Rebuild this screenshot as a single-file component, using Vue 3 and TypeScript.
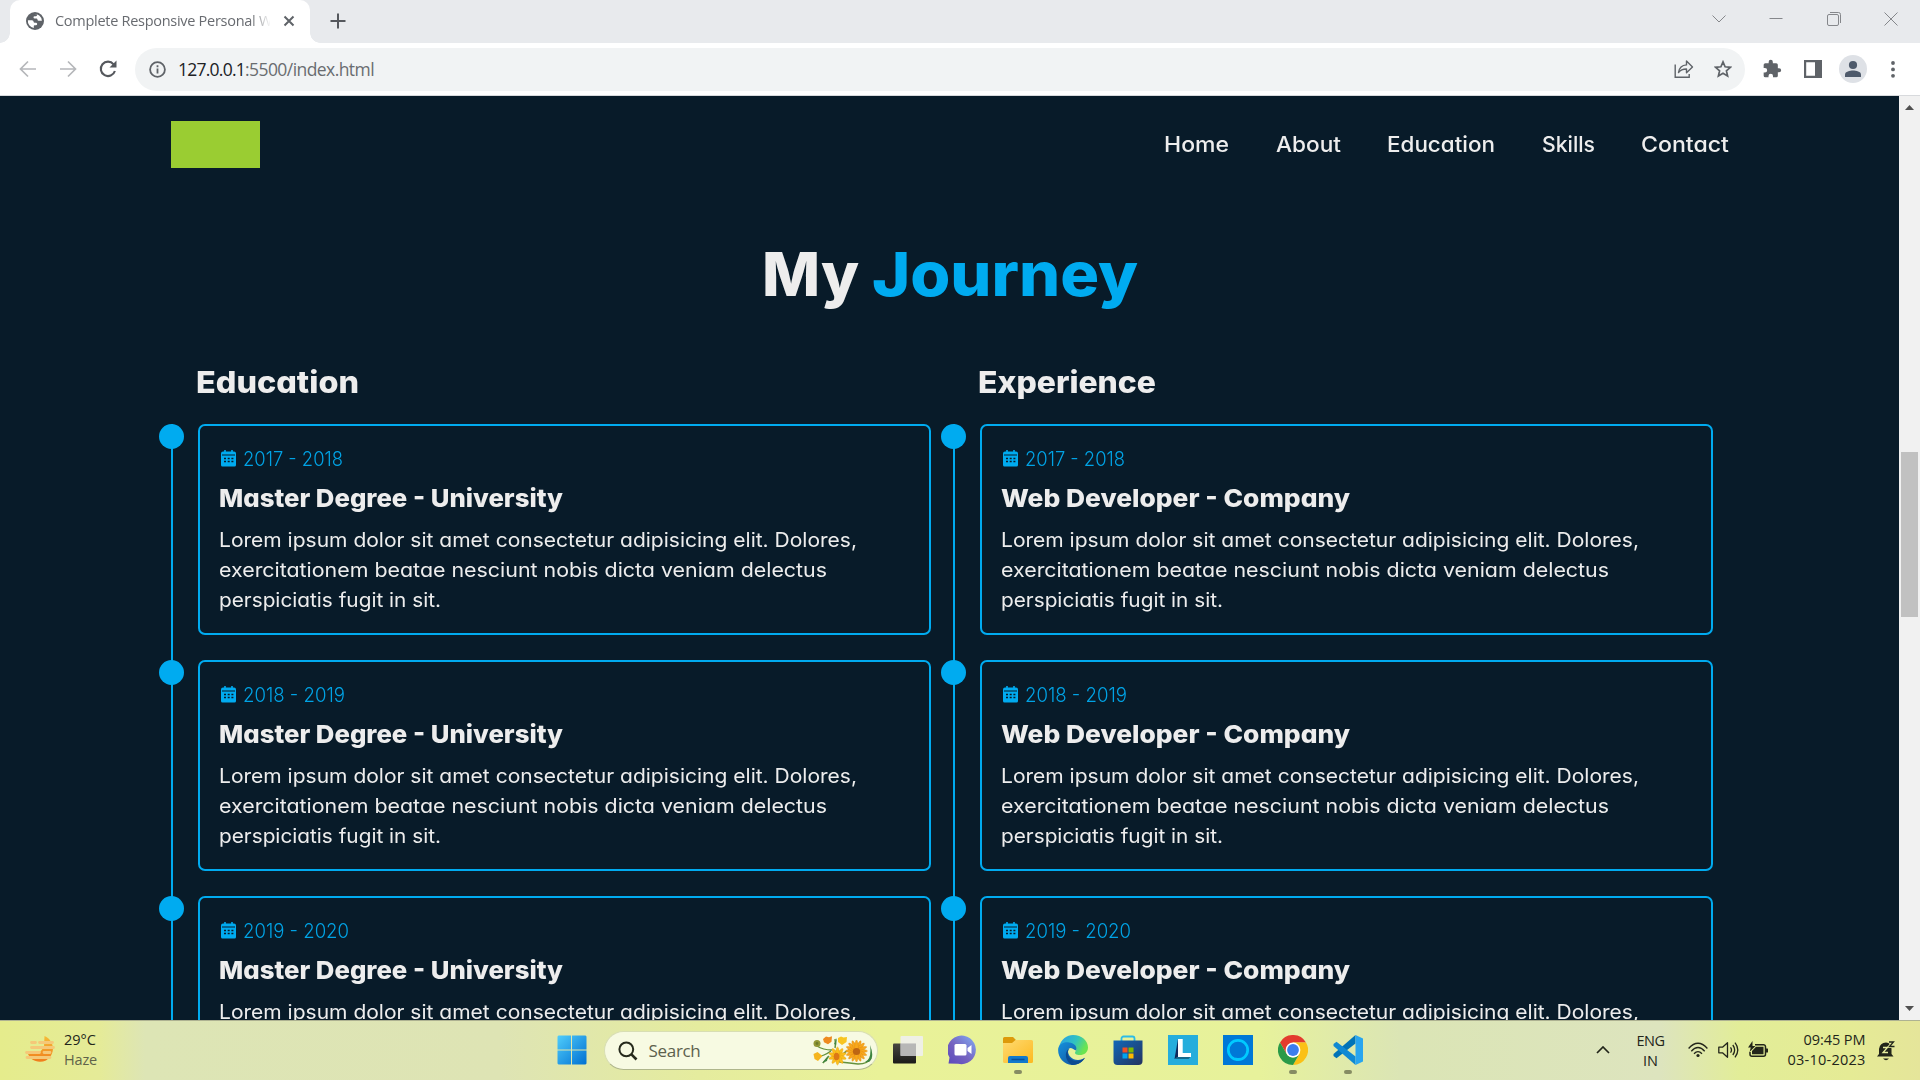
<script setup lang="ts">
const nav = [
  { label: 'Home', width: 65 },
  { label: 'About', width: 65 },
  { label: 'Education', width: 108 },
  { label: 'Skills', width: 53 },
  { label: 'Contact', width: 88 },
]
const years: { text: string; width: number }[] = [
  { text: '2017 - 2018', width: 100 },
  { text: '2018 - 2019', width: 102 },
  { text: '2019 - 2020', width: 106 },
]
const lines = [
  { text: 'Lorem ipsum dolor sit amet consectetur adipisicing elit. Dolores,', width: 638 },
  { text: 'exercitationem beatae nesciunt nobis dicta veniam delectus', width: 608 },
  { text: 'perspiciatis fugit in sit.', width: 222 },
]
const columns = [
  { heading: 'Education', width: 163, title: 'Master Degree - University', titleWidth: 344 },
  { heading: 'Experience', width: 178, title: 'Web Developer - Company', titleWidth: 349 },
]

// Tracks a run of text out (or in) so that it occupies the given width.
const vFit = {
  mounted(el: HTMLElement, binding: { value: number }) {
    const count = (el.textContent ?? '').length
    const natural = el.getBoundingClientRect().width
    el.style.letterSpacing = `${(binding.value - natural) / count}px`
  },
}

// Widens the letterforms themselves, keeping the tight geometric spacing.
const vStretch = {
  mounted(el: HTMLElement, binding: { value: number }) {
    const natural = el.getBoundingClientRect().width
    el.style.transform = `scaleX(${binding.value / natural})`
  },
}
</script>

<template>
  <div class="screen">
    <header class="tabstrip">
      <div class="tab">
        <svg class="globe" width="18" height="18" viewBox="0 0 18 18">
          <circle cx="9" cy="9" r="9" fill="#5f6368" />
          <path d="M1.900 8.200H6q1.600.2 1.600 1.600 0 .9 1.200.9h1.400q1 .2 1 1.200 0 1.300-1.400 1.300H8.600q-.8.100-.8.900v1.900A7 7 0 0 1 1.900 8.200zM7.600 2.100q2-.4 3.400.100v.8q0 1.300-1.200 1.300H8.500q-1 .1-1 1.100t1.200 1.200h2q.8.2.8 1.100t1.100 1h3.300A7.100 7.100 0 0 0 7.600 2.100z" fill="#fff" />
        </svg>
        <div class="tab-title"><span v-fit="217">Complete Responsive Personal W</span></div>
        <svg class="tab-close" width="12" height="12" viewBox="0 0 12 12"><path d="M1.500 1.500l9 9M10.500 1.500l-9 9" stroke="#5f6368" stroke-width="2" /></svg>
      </div>
      <svg class="new-tab" width="16" height="16" viewBox="0 0 16 16"><path d="M8 .5v15M.5 8h15" stroke="#55585d" stroke-width="2" /></svg>
      <div class="window-controls">
        <svg width="14" height="14" viewBox="0 0 14 14"><path d="M.5 3.500L7 10l6.500-6.500" /></svg>
        <svg width="14" height="14" viewBox="0 0 14 14"><path d="M.5 6.500h13" /></svg>
        <svg width="14" height="14" viewBox="0 0 14 14"><rect x=".5" y="2.500" width="11" height="11" rx="1.500" /><path d="M3 .5h8.500a2 2 0 0 1 2 2V11" /></svg>
        <svg width="14" height="14" viewBox="0 0 14 14"><path d="M.5 .5l13 13M13.500 .5l-13 13" /></svg>
      </div>
    </header>

    <div class="toolbar">
      <svg class="back" width="18" height="18" viewBox="0 0 18 18"><path d="M17 9H2M9 1.500L1.500 9 9 16.500" fill="none" stroke="#b5b7ba" stroke-width="1.700" /></svg>
      <svg class="forward" width="18" height="18" viewBox="0 0 18 18"><path d="M1 9h15M9 1.500L16.500 9 9 16.500" fill="none" stroke="#b5b7ba" stroke-width="1.700" /></svg>
      <svg class="reload" width="18" height="18" viewBox="0 0 18 18"><path d="M14.600 4.300A7.200 7.200 0 1 0 15.900 11" fill="none" stroke="#55585d" stroke-width="2.100" /><path d="M17.500 .5v7H10.500z" fill="#55585d" /></svg>
      <div class="omnibox">
        <svg width="17" height="17" viewBox="0 0 17 17"><circle cx="8.500" cy="8.500" r="7.400" fill="none" stroke="#5f6368" stroke-width="1.800" /><path d="M8.500 7.500v5M8.500 4.200v2" stroke="#5f6368" stroke-width="1.800" /></svg>
        <div class="url"><span v-fit="67" class="host">127.0.0.1</span><span v-fit="129">:5500/index.html</span></div>
        <svg class="share" width="20" height="20" viewBox="0 0 20 20" fill="none" stroke="#5f6368" stroke-width="1.400"><path d="M1.200 5.500v12.800h14V15" /><path d="M4.500 13.500c.8-5 3.500-7.300 8-7.600V2l6 6-6 5.700V10c-3.500 0-6 .8-8 3.500z" stroke-linejoin="round" /></svg>
        <svg class="star" width="18" height="18" viewBox="0 0 18 18"><path d="M9 1.900l2.100 4.900 5.300.5-4 3.500 1.200 5.200L9 13.200 4.400 16l1.200-5.200-4-3.500 5.300-.5z" fill="none" stroke="#5f6368" stroke-width="1.700" /></svg>
      </div>
      <svg class="puzzle" width="20" height="20" viewBox="0 0 24 24" fill="#5f6368"><path d="M20.500 11H19V7a2 2 0 0 0-2-2h-4V3.500a2.500 2.500 0 0 0-5 0V5H4a2 2 0 0 0-2 2v3.800h1.500a2.700 2.700 0 0 1 0 5.400H2V20a2 2 0 0 0 2 2h3.800v-1.500a2.700 2.700 0 0 1 5.400 0V22H17a2 2 0 0 0 2-2v-4h1.500a2.500 2.500 0 0 0 0-5z" /></svg>
      <svg class="panel" width="18" height="18" viewBox="0 0 18 18"><path d="M0 0h18v18H0zM2.200 2.200v13.600h8.800V2.200z" fill="#5f6368" fill-rule="evenodd" /></svg>
      <svg class="avatar" width="28" height="28" viewBox="0 0 28 28"><circle cx="14" cy="14" r="14" fill="#dee1e6" /><circle cx="14" cy="10" r="4.100" fill="#4e5a6b" /><path d="M6 22v-2.500c0-3 5-4 8-4s8 1 8 4V22z" fill="#4e5a6b" /></svg>
      <svg class="dots" width="4" height="17" viewBox="0 0 4 17" fill="#5f6368"><circle cx="2" cy="2" r="1.900" /><circle cx="2" cy="8.400" r="1.900" /><circle cx="2" cy="14.800" r="1.900" /></svg>
    </div>

    <div class="viewport">
      <main class="page">
        <div class="site-header">
          <div class="logo"></div>
          <nav>
            <a v-for="item in nav" :key="item.label" :style="{ width: item.width + 'px' }"><span v-stretch="item.width">{{ item.label }}</span></a>
          </nav>
        </div>
        <h2 class="heading"><b><span v-stretch="97">My</span></b><em><span v-stretch="266">Journey</span></em></h2>
        <div class="columns">
          <section v-for="col in columns" :key="col.heading" class="column">
            <h3><span v-stretch="col.width">{{ col.heading }}</span></h3>
            <div class="timeline">
              <article v-for="year in years" :key="year.text" class="card">
                <i class="marker"></i>
                <div class="year">
                  <svg width="15" height="17" viewBox="0 0 15 17"><path d="M3.200 0h1.600v1.500h5.400V0h1.600v1.500H13a2 2 0 0 1 2 2V15a1.500 1.500 0 0 1-1.500 1.500h-12A1.500 1.500 0 0 1 0 15V3.500a2 2 0 0 1 2-2h1.200z" fill="#00abf0" /><path d="M1 5h13" stroke="#081b29" /><path d="M3 8.500h9.500M3 11.500h9.500" stroke="#081b29" stroke-width="1.500" stroke-dasharray="2 1.700" /></svg>
                  <span v-stretch="year.width">{{ year.text }}</span>
                </div>
                <h4><span v-stretch="col.titleWidth">{{ col.title }}</span></h4>
                <div class="text">
                  <p v-for="line in lines" :key="line.text"><span v-stretch="line.width">{{ line.text }}</span></p>
                </div>
              </article>
            </div>
          </section>
        </div>
      </main>
      <div class="scrollbar">
        <svg width="9" height="5" viewBox="0 0 9 5"><path d="M0 5L4.500 0 9 5z" fill="#505050" /></svg>
        <div class="thumb"></div>
        <svg width="9" height="5" viewBox="0 0 9 5"><path d="M0 0L4.500 5 9 0z" fill="#505050" /></svg>
      </div>
    </div>

    <footer class="taskbar">
      <div class="weather">
        <svg width="30" height="30" viewBox="0 0 30 30">
          <defs><linearGradient id="sun" x1="0" y1="0" x2="0" y2="1"><stop offset="0" stop-color="#f5bd38" /><stop offset="1" stop-color="#f07c1b" /></linearGradient></defs>
          <path d="M19.500 2c11 5 11 19 1.500 24.500C13 30 4 26 2.500 18H15l4-5z" fill="url(#sun)" />
          <path d="M6.500 8.500h4M14.500 8.500h13M6.500 13.500h22M1.500 18.500h13M19 18.500h6M2 23.500h23" stroke="#f5c878" stroke-width="2.800" stroke-linecap="round" />
        </svg>
        <div class="weather-text"><b><span v-fit="32">29°C</span></b><small><span v-fit="33">Haze</span></small></div>
      </div>

      <div class="apps">
        <svg width="30" height="30" viewBox="0 0 30 30" class="start">
          <defs><linearGradient id="win" x1="0" y1="0" x2="1" y2="1"><stop offset="0" stop-color="#50cdfb" /><stop offset="1" stop-color="#0070d2" /></linearGradient></defs>
          <path d="M1.500 .5H14v14H.5v-13zM15 .5h13.500l1 1v13H15zM.5 15.500H14v14H1.500l-1-1zM15 15.500h14.500v13l-1 1H15z" fill="url(#win)" />
        </svg>
        <div class="search">
          <svg width="20" height="20" viewBox="0 0 20 20"><circle cx="8.300" cy="8.300" r="6.900" fill="none" stroke="#262a1c" stroke-width="2" /><path d="M13.200 13.200l5.300 5.300" stroke="#262a1c" stroke-width="2.600" /></svg>
          <span v-fit="52">Search</span>
          <svg class="flowers" width="60" height="32" viewBox="0 0 60 32">
            <g fill="none" stroke="#64913d" stroke-width="1.500"><path d="M4 11q6 4 15 4M4 22q7-1 14-6M10 28l6-7M22 13q1-4 0-9M36 15q-8 3-9 12 10 1 18 2 10 0 13-6" /></g>
            <path d="M9 28l6-7-1 5zM21 9l3-6-1 7zM52 27q7-3 5-17 5 12-1 17z" fill="#3f8540" />
            <circle cx="4" cy="8.500" r="3.500" fill="#929735" /><circle cx="4" cy="8.500" r="1.400" fill="#6c7a2a" />
            <path d="M10 4l3-2.500 3 .8 3-1-.5 5.500-3.500 2.500-4-2z" fill="#ee8a20" /><path d="M25 3l3-1.500 2.500 1L34 2l-.5 5-4.500 3-4-3z" fill="#f8c521" />
            <path d="M.5 19l4-2 5 4-4.500 5-3.500-2z" fill="#f5b51e" />
            <g fill="#fbc01b" stroke="#e39a12" stroke-width=".4"><ellipse v-for="a in 5" :key="a" cx="24.500" cy="21" rx="2" ry="9" :transform="`rotate(${a * 36} 24.500 21)`" /></g>
            <ellipse cx="23.500" cy="21.500" rx="2.800" ry="3.800" fill="#dc7815" />
            <g fill="#f8a81c" stroke="#df8612" stroke-width=".4"><ellipse v-for="a in 8" :key="a" cx="43.500" cy="16" rx="2" ry="11" :transform="`rotate(${a * 22.5} 43.500 16)`" /></g>
            <circle cx="43.500" cy="16.500" r="3.600" fill="#bd6513" />
          </svg>
        </div>
        <svg width="30" height="30" viewBox="0 0 30 30" class="i-task">
          <defs><linearGradient id="dark" x1="0" y1="0" x2="0" y2="1"><stop stop-color="#484840" /><stop offset="1" stop-color="#1b1b19" /></linearGradient></defs>
          <rect x="0" y="8.500" width="23" height="20" rx="1" fill="url(#dark)" /><rect x="7.500" y="1" width="22.500" height="20" rx="1" fill="#eff0ee" fill-opacity=".9" /><path d="M7.500 8.500H23V21H7.500z" fill="#aaa" fill-opacity=".75" />
        </svg>
        <svg width="30" height="30" viewBox="0 0 30 30" class="i-chat">
          <defs><linearGradient id="chat" x1="0" y1="1" x2="1" y2="0"><stop stop-color="#5a48bb" /><stop offset=".45" stop-color="#7562c0" /><stop offset="1" stop-color="#82aff5" /></linearGradient></defs>
          <path d="M.5 28.500l1-6A14.300 14.300 0 1 1 10 28.700z" fill="url(#chat)" /><rect x="6.500" y="9" width="12" height="11.500" rx="1.500" fill="#fff" /><path d="M19.500 13l4-3v9l-4-3z" fill="#fff" />
        </svg>
        <span class="slot i-folder"><svg width="30" height="30" viewBox="0 0 30 30">
          <defs><linearGradient id="folder" x1="0" y1="0" x2="1" y2="1"><stop stop-color="#ffda71" /><stop offset="1" stop-color="#fcb920" /></linearGradient></defs>
          <path d="M0 3.500a1.500 1.500 0 0 1 1.500-1.500H10l3 3v5H0z" fill="#dd9a0b" /><path d="M0 8h9l3.500-3H28.500A1.500 1.500 0 0 1 30 6.500v20a1.500 1.500 0 0 1-1.500 1.500h-27A1.500 1.500 0 0 1 0 26.500z" fill="url(#folder)" /><path d="M5 28v-5a2 2 0 0 1 2-2h16a2 2 0 0 1 2 2v5z" fill="#1279cc" /><path d="M8.500 24.500h13" stroke="#074f9b" stroke-width="1.500" />
        </svg><u></u></span>
        <svg width="30" height="30" viewBox="0 0 30 30" class="i-edge">
          <defs><linearGradient id="edge" x1="0" y1="0" x2="1" y2=".4"><stop offset=".2" stop-color="#2ba8dc" /><stop offset=".6" stop-color="#31c3bf" /><stop offset="1" stop-color="#6be44f" /></linearGradient><linearGradient id="edge2" x1="0" y1="0" x2="1" y2="1"><stop stop-color="#1690dc" /><stop offset="1" stop-color="#114d96" /></linearGradient></defs>
          <path d="M1 12C3 4 9 0 15 0c9 0 15 6 15 12.500 0 5-4 7.500-8 7.500-4 0-6-1.500-4.500-3.500 2-3-.5-6-3.500-6z" fill="url(#edge)" />
          <path d="M.3 13C2 8 7 6.800 11 7.400c6 .9 8.500 4.600 7 8-2 0-4-4-7-1.800-3 2.800 1 11.400 9 11.400 3 0 5-1 7-2.200C23 29 18 30 14 30 5 29.500-1 21 .3 13z" fill="url(#edge2)" />
          <path d="M11.500 13.500C8 17 10 25 18 26.200c3 .3 6-1 9-3.400-3 5-8 7.200-13 7.200C8 27 5 17 11.500 13.500z" fill="#0d4b91" />
        </svg>
        <svg width="30" height="30" viewBox="0 0 30 30" class="i-store">
          <defs><linearGradient id="store" x1="0" y1="0" x2="1" y2="1"><stop stop-color="#1268b8" /><stop offset="1" stop-color="#24335f" /></linearGradient></defs>
          <path d="M8.500 6V3.500a2 2 0 0 1 2-2h9a2 2 0 0 1 2 2V6" fill="none" stroke="#2bbce8" stroke-width="1.800" /><path d="M.5 5.500h29V26a4 4 0 0 1-4 4h-21a4 4 0 0 1-4-4z" fill="url(#store)" /><path d="M9.500 12.500h5v5h-5z" fill="#f25022" /><path d="M15.500 12.500h5v5h-5z" fill="#7fba00" /><path d="M9.500 18.500h5v5h-5z" fill="#00a4ef" /><path d="M15.500 18.500h5v5h-5z" fill="#ffb900" />
        </svg>
        <svg width="30" height="30" viewBox="0 0 30 30" class="i-l"><path d="M0 0h30v30H0z" fill="#25addc" /><path d="M10 4L6.500 24 10 22z" fill="#10295b" /><path d="M6.500 24L10 21.500h13L20.500 24z" fill="#17698c" /><path d="M10 4h4.700v14h8.300v4H10z" fill="#fff" /></svg>
        <svg width="30" height="30" viewBox="0 0 30 30" class="i-alexa"><path d="M0 0h30v30H0z" fill="#0078d7" /><circle cx="15" cy="15" r="9.700" fill="none" stroke="#00caff" stroke-width="2.700" /><path d="M12.500 22.500q3 1 5 0l-4 3.500z" fill="#00caff" /></svg>
        <span class="slot i-chrome"><svg width="30" height="30" viewBox="0 0 30 30">
          <path d="M2 7.500A15 15 0 0 1 28 7.500H15L8.500 18.700z" fill="#e33b2e" /><path d="M28 7.500A15 15 0 0 1 15 30l6.500-11.200L15 7.500z" fill="#fbc116" /><path d="M15 30A15 15 0 0 1 2 7.500l6.500 11.300a7.500 7.500 0 0 0 13 0z" fill="#2a9a48" /><circle cx="15" cy="15" r="7.400" fill="#fff" /><circle cx="15" cy="15" r="5.900" fill="#3b7ded" />
        </svg><u></u></span>
        <span class="slot i-code"><svg width="30" height="30" viewBox="0 0 30 30">
          <path d="M22.500 0v8.500L3.500 23.300.5 21v-2z" fill="#0073b7" /><path d="M22.500 30v-8.500L3.500 6.700.5 9v2z" fill="#1089d3" /><path d="M22.500 0L30 3.500v23L22.500 30z" fill="#29a5ef" />
        </svg><u></u></span>
      </div>

      <div class="tray">
        <svg class="caret" width="14" height="8" viewBox="0 0 14 8"><path d="M1 7l6-6 6 6" fill="none" stroke="#22251a" stroke-width="1.700" /></svg>
        <div class="lang"><span v-fit="28">ENG</span><span v-fit="15">IN</span></div>
        <svg class="wifi" width="20" height="16" viewBox="0 0 20 16" fill="none" stroke="#22251a" stroke-width="1.300"><path d="M.6 6.500q9.400-10.500 18.800 0M3.300 9.200q6.700-7.400 13.400 0M6 11.700q4-4.200 8 0" /><circle cx="10" cy="13.500" r="1.600" fill="#22251a" stroke="none" /></svg>
        <svg class="volume" width="21" height="18" viewBox="0 0 21 18" fill="none" stroke="#22251a" stroke-width="1.300"><path d="M.8 6.200h3.700l5-4.500v14.600l-5-4.500H.8zM12.500 6.300q2 2.700 0 5.400M14.800 4q3.700 5 0 10M17 1.700q5.600 7.300 0 14.600" stroke-linejoin="round" /></svg>
        <svg class="battery" width="21" height="17" viewBox="0 0 21 17"><path d="M7 3.700h8.500a2 2 0 0 1 2 2v7.500a2 2 0 0 1-2 2H4a2 2 0 0 1-2-2V11" fill="none" stroke="#22251a" stroke-width="1.500" /><path d="M8 5.700h7.500v7.500H4V10zM18 7.500h1.500q.5 0 .5.500v3q0 .5-.5.500H18z" fill="#22251a" /><path d="M4.500 0L0 6.500h2.800L1.500 11 7.500 5H4.500z" fill="#22251a" /></svg>
        <div class="clock"><span v-fit="62">09:45 PM</span><span v-fit="78">03-10-2023</span></div>
        <svg class="bell" width="18" height="20" viewBox="0 0 18 20"><path d="M0 15.500l2-2.500V8q1-6.500 7-6.500 5.500 0 5.500 6.500v5l2 2.500z" fill="#22251a" /><path d="M6 17.500h6q-3 3.500-6 0z" fill="#22251a" /><path d="M6 6.500h4.500l-4.500 5h5" stroke="#e6ec9e" stroke-width="1.300" fill="none" /><path d="M12 1h4.500l-4 4.500h5" fill="none" stroke="#e6ec9e" stroke-width="3" /><path d="M12 1h4.500l-4 4.500h5" fill="none" stroke="#22251a" stroke-width="1.300" /></svg>
      </div>
    </footer>
  </div>
</template>

<style>
body { margin: 0; overflow: hidden; }
</style>

<style scoped>
* { box-sizing: border-box; }
svg { display: block; flex: none; }
span { white-space: nowrap; }
.screen { width: 1920px; height: 1080px; overflow: hidden; display: flex; flex-direction: column; font-family: "Open Sans", "Noto Sans", sans-serif; }

.tabstrip { flex: none; height: 43px; background: #e8eaed; display: flex; align-items: flex-start; padding-left: 10px; }
.tab { position: relative; width: 300px; height: 43px; background: #fff; border-radius: 10px 10px 0 0; display: flex; align-items: center; padding: 0 15px 2px 16px; }
.tab::before, .tab::after { content: ""; position: absolute; bottom: 0; width: 10px; height: 10px; }
.tab::before { left: -10px; background: radial-gradient(circle at 0 0, #e8eaed 9.500px, #fff 10px); }
.tab::after { right: -10px; background: radial-gradient(circle at 100% 0, #e8eaed 9.500px, #fff 10px); }
.tab-title { margin-left: 11px; width: 218px; overflow: hidden; font-size: 14.500px; line-height: 20px; color: #686b70; -webkit-mask-image: linear-gradient(90deg, #000 195px, transparent 216px); }
.tab-close { margin-left: 13px; }
.new-tab { margin: 13px 0 0 20px; }
.window-controls { margin: 12px 22px 0 auto; display: flex; gap: 43.500px; fill: none; stroke: #85878b; }

.toolbar { flex: none; height: 53px; background: #fff; border-bottom: 1px solid #d8dadd; display: flex; align-items: center; padding: 0 25px 0 19px; }
.forward { margin-left: 22px; }
.reload { margin-left: 22px; }
.omnibox { margin-left: 18px; width: 1610px; height: 43px; border-radius: 22px; background: #f1f3f4; display: flex; align-items: center; padding: 0 13px 0 14px; }
.url { margin-left: 12px; font-size: 17.500px; line-height: 24px; color: #696c70; display: flex; }
.host { color: #202124; }
.share { margin-left: auto; }
.star { margin-left: 20px; }
.puzzle { margin-left: 17px; }
.panel { margin-left: 22px; }
.avatar { margin-left: 17px; }
.dots { margin-left: auto; }

.viewport { flex: none; height: 924px; display: flex; overflow: hidden; }
.page { width: 1899px; background: #081b29; color: #ededed; font-family: Inter, "Open Sans", sans-serif; font-feature-settings: "cv11"; overflow: hidden; }
.page span { display: inline-block; transform-origin: 0 50%; }
.site-header { height: 97px; padding: 0 170px 0 171px; display: flex; align-items: center; justify-content: space-between; }
.logo { width: 89px; height: 47px; background: #9acd32; }
nav { display: flex; gap: 46.500px; font-size: 21px; font-weight: 500; }
.heading { margin: 44px 0 0; padding: 0 0 0 762px; height: 76px; display: flex; font-size: 61px; line-height: 75px; font-weight: 800; }
.heading b { width: 97px; font-weight: 800; }
.heading em { margin-left: 13px; font-style: normal; color: #00abf0; }
.columns { display: flex; gap: 22px; padding: 42px 0 0 171px; }
.column { width: 760px; }
h3 { margin: 0; padding-left: 25px; height: 69px; font-size: 30px; line-height: 54px; font-weight: 800; }
.timeline { border-left: 2px solid #00abf0; padding-left: 25px; display: flex; flex-direction: column; gap: 25px; }
.card { position: relative; width: 733px; height: 211px; border: 2px solid #00abf0; border-radius: 7px; padding: 18px 18px 0; }
.marker { position: absolute; left: -41px; top: -2px; width: 25px; height: 25px; border-radius: 50%; background: #00abf0; }
.year { display: flex; align-items: center; gap: 7px; padding-left: 3px; height: 30px; font-size: 19.500px; font-weight: 350; color: #00a3e5; }
.year svg { margin-bottom: 2px; }
h4 { margin: 5px 0 0; padding-left: 0.500px; font-size: 25px; line-height: 39px; font-weight: 800; }
.text { padding: 7px 0 0 0.500px; font-size: 20px; line-height: 30px; }
.text p { margin: 0; height: 30px; }
.scrollbar { width: 21px; background: #f1f1f1; display: flex; flex-direction: column; align-items: center; padding: 9px 0; }
.thumb { width: 17px; height: 165px; margin: 342px 0 auto; background: #c1c1c1; }

.taskbar { flex: none; height: 60px; border-top: 1px solid #aeb292; display: flex; background: linear-gradient(90deg, #e5ec8c 0, #e5eb98 100px, #dde5b5 145px, #dee4b4 500px, #e5ec9e 700px, #e9f298 880px, #e7f29b 1260px, #dbe5b5 1400px, #dde4be 1660px, #e2ed98 1740px, #e5eb95 1850px, #e5e59a 1920px); }
.weather { width: 556.500px; padding: 13px 0 0 25px; display: flex; align-items: flex-start; }
.weather-text { margin: -4px 0 0 9px; display: flex; flex-direction: column; font-size: 14.500px; line-height: 20px; color: #22251a; }
.weather-text b { font-weight: 400; }
.weather-text small { font-size: 14.500px; color: #60634a; }
.apps { width: 1040px; display: flex; align-items: flex-start; padding-top: 14px; }
.search { margin: -4px 0 0 17px; width: 274px; height: 39px; border-radius: 20px; background: #f7fae2; border: 1px solid #d8deb3; border-bottom-color: #afb68c; display: flex; align-items: center; padding: 0 4px 0 13px; font-size: 17px; color: #5d614d; }
.search span { margin-left: 11px; }
.flowers { margin-left: auto; }
.i-task { margin-left: 15px; }
.i-chat, .i-edge, .i-store, .i-l, .i-alexa { margin-left: 25px; }
.slot { position: relative; display: block; margin-left: 25px; height: 42px; }
.slot u { position: absolute; left: 11px; top: 35px; width: 8px; height: 4px; border-radius: 2px; background: #868c63; }
.tray { flex: 1; display: flex; align-items: flex-start; color: #22251a; font-size: 14.500px; line-height: 20px; }
.caret { margin: 25px 0 0 -1px; }
.lang { width: 60px; margin: 10px 0 0 11px; display: flex; flex-direction: column; align-items: center; }
.wifi { margin: 21px 0 0 7px; }
.volume { margin: 20px 0 0 10px; }
.battery { margin: 20px 0 0 9px; }
.clock { width: 97px; margin-top: 9px; display: flex; flex-direction: column; align-items: flex-end; }
.bell { margin: 20px 0 0 11px; }
</style>
